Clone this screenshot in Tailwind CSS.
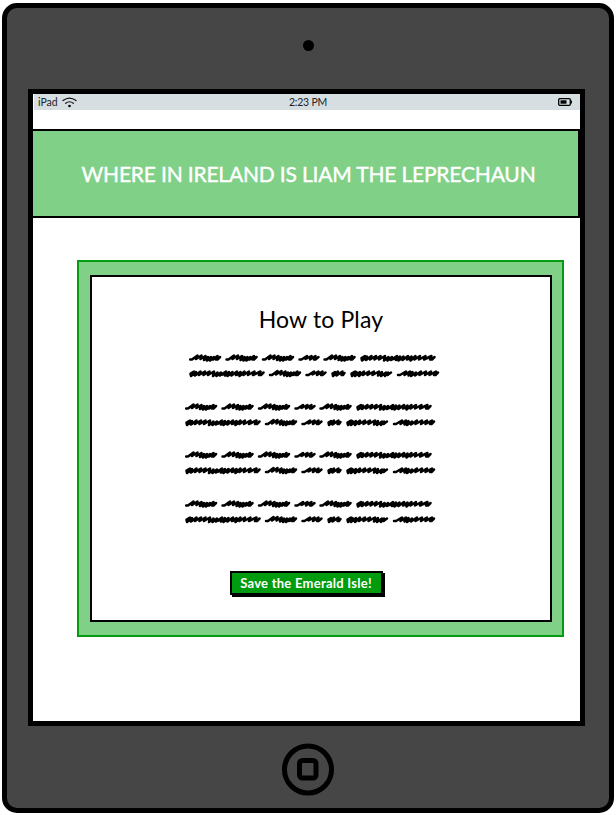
<!DOCTYPE html>
<html lang="en">
<head>
<meta charset="utf-8">
<title>Where in Ireland is Liam the Leprechaun</title>
<script src="https://cdn.jsdelivr.net/npm/@tailwindcss/browser@4"></script>
</head>
<body class="bg-white w-[616px] h-[815px] overflow-hidden font-['Lato',sans-serif] text-black">
<svg class="hidden">
  <defs>
    <g id="w5"><path d="M1 5.500H3L8.500 1.500 7 5 12.500 1.500 11.500 5 16.500 2 15 6 19 3 18 6.500 22 3 21 6.500 25 3 24 5.500 28.500 2 27 5.500H28.500L31 3"/><path d="M16 5 25 5"/></g>
    <g id="w3"><path d="M1 5.500H3L8.500 2 7 5 13 2 11.500 5.500 17 2 15.500 5.500H17L20 3"/></g>
    <g id="w12"><path d="M5 2 1.500 4 2 6.500 7 2.500 6 6 11.500 2 10 5.500 16 2 14.500 5.500 20.500 2 19 5.500 25 2 24 6.500 28.500 3 27.500 6.500 32 3 31 6 37 2 36 6 40 2.500 38.500 6.500 43.500 2.500 42.500 6 48 2 47 5.500 51.500 2.500 50.500 6.500 55.500 2 54.500 5.500 60 2 59 5.500 65.500 2 64 5.500 71.500 2 70 5.500H72L74.500 3"/><path d="M2 5H7M25 5 34 5M38 5H43M48 5H52"/></g>
    <g id="w7"><path d="M5 2 1.500 4 2 6.500 6.500 2.500 5 6.500 10 2.500 9 6.500 14 2 13 5.500 19 2 17.500 5.500 24 2 22.500 5.500 29 2 28 6 32 2.500 31 6.500 36 3 35 6.500 38 3 37.500 5.500 41 3"/><path d="M2 5H10M29 5H38"/></g>
    <g id="w2"><path d="M4 2.500 1.500 4 2 6.500 7 2 5.500 6 11.500 2 10.500 5.500H12L13.500 3.500M2 5H6"/></g>
    <g id="w7b"><path d="M1 5.500H3L9 2 7.500 5.500 13 2 11.500 6 15.500 2.500 14 6.500 19 3 18 6 24 2 22.500 5.500 29 2 28 5.500 34 2 32.500 5.500 39 2 37 5.500H38.500L41 3M12 5 19 5"/></g>
    <g id="para" fill="none" stroke="#000" stroke-width="2.500" stroke-linecap="round" stroke-linejoin="round">
      <use href="#w5" x="0" y="2"/><use href="#w5" x="36.500" y="2"/><use href="#w5" x="73" y="2"/><use href="#w3" x="109.500" y="2"/><use href="#w5" x="134.500" y="2"/><use href="#w12" x="171" y="2"/>
      <use href="#w12" x="0" y="17.500"/><use href="#w5" x="80" y="17.500"/><use href="#w3" x="116.500" y="17.500"/><use href="#w2" x="142" y="17.500"/><use href="#w7" x="161" y="17.500"/><use href="#w7b" x="208" y="17.500"/>
    </g>
  </defs>
</svg>
<div class="pl-[2px] pt-[3px]">
  <div class="w-[612px] h-[810px] bg-[#464646] border-5 border-black rounded-[15px] flex flex-col items-center">
    <div class="h-[81px] w-full flex justify-center pt-[32px]"><div class="w-[11px] h-[11px] rounded-full bg-black"></div></div>
    <main class="w-[557px] h-[637px] shrink-0 border-5 border-black bg-white -ml-[3px]">
      <div class="h-[16px] ml-px bg-[#d7dee1] grid grid-cols-3 items-center pl-[4px] pr-[8px] text-[10.500px] leading-[16px] text-[#222]">
        <div class="flex items-center gap-[4px]"><span>iPad</span>
          <svg width="15" height="11" viewBox="0 0 15 11" fill="none" stroke="#111" stroke-width="1.200" stroke-linecap="round"><path d="M1 3.600Q7.500-1.400 14 3.600M3.700 6.300Q7.500 3.200 11.300 6.300"/><circle cx="7.500" cy="9" r="1.300" fill="#000" stroke="none"/></svg>
        </div>
        <div class="text-center whitespace-nowrap pl-[6px] tracking-[-0.2px]">2:23 PM</div>
        <svg class="justify-self-end" width="14" height="8" viewBox="0 0 14 8"><rect x=".7" y=".7" width="11.600" height="6.600" rx="1" fill="none" stroke="#000" stroke-width="1.300"/><path d="M13.300 2.500v3" stroke="#000" stroke-width="1.200"/><path d="M2.500 2.300h6v3.400h-6z" fill="#000"/></svg>
      </div>
      <header class="mt-[19px] h-[89px] bg-[#80d088] border-y-[2.500px] border-r-2 border-black flex items-center justify-center pl-[6px] pt-px">
        <h1 class="text-white text-[21px] leading-[28px] whitespace-nowrap tracking-[-0.18px] [-webkit-text-stroke:0.4px_white]">WHERE IN IRELAND IS LIAM THE LEPRECHAUN</h1>
      </header>
      <section class="mt-[42px] ml-[44px] w-[487px] h-[377px] bg-[#80d088] border-[2.500px] border-[#059c12] pl-[11px] pt-[13px]">
        <div class="w-[462px] h-[347px] bg-white border-[2.500px] border-black flex flex-col items-center">
          <h2 class="mt-[26px] h-[32px] leading-[32px] text-[23px] whitespace-nowrap tracking-[0.15px]">How to Play</h2>
          <div class="self-start ml-[93px] mt-[17px] flex flex-col">
            <svg class="ml-[4px]" width="252" height="48.500"><use href="#para"/></svg>
            <svg width="252" height="48.500"><use href="#para"/></svg>
            <svg width="252" height="49"><use href="#para"/></svg>
            <svg width="252" height="49"><use href="#para"/></svg>
          </div>
          <button class="self-start mt-[24px] ml-[138px] w-[153px] h-[24px] bg-[#009b0e] border-2 border-black shadow-[2px_2px_0_#000] text-white text-[13px] leading-[18px] font-bold whitespace-nowrap flex items-center justify-center pr-px tracking-[0.26px]">Save the Emerald Isle!</button>
        </div>
      </section>
    </main>
    <svg class="mt-[16px] w-[54px] h-[54px] shrink-0" viewBox="0 0 54 54" fill="none" stroke="#000" stroke-width="5"><circle cx="27" cy="27.500" r="23.500"/><rect x="18.500" y="18.500" width="16.500" height="17.500" rx="3"/></svg>
  </div>
</div>
</body>
</html>
